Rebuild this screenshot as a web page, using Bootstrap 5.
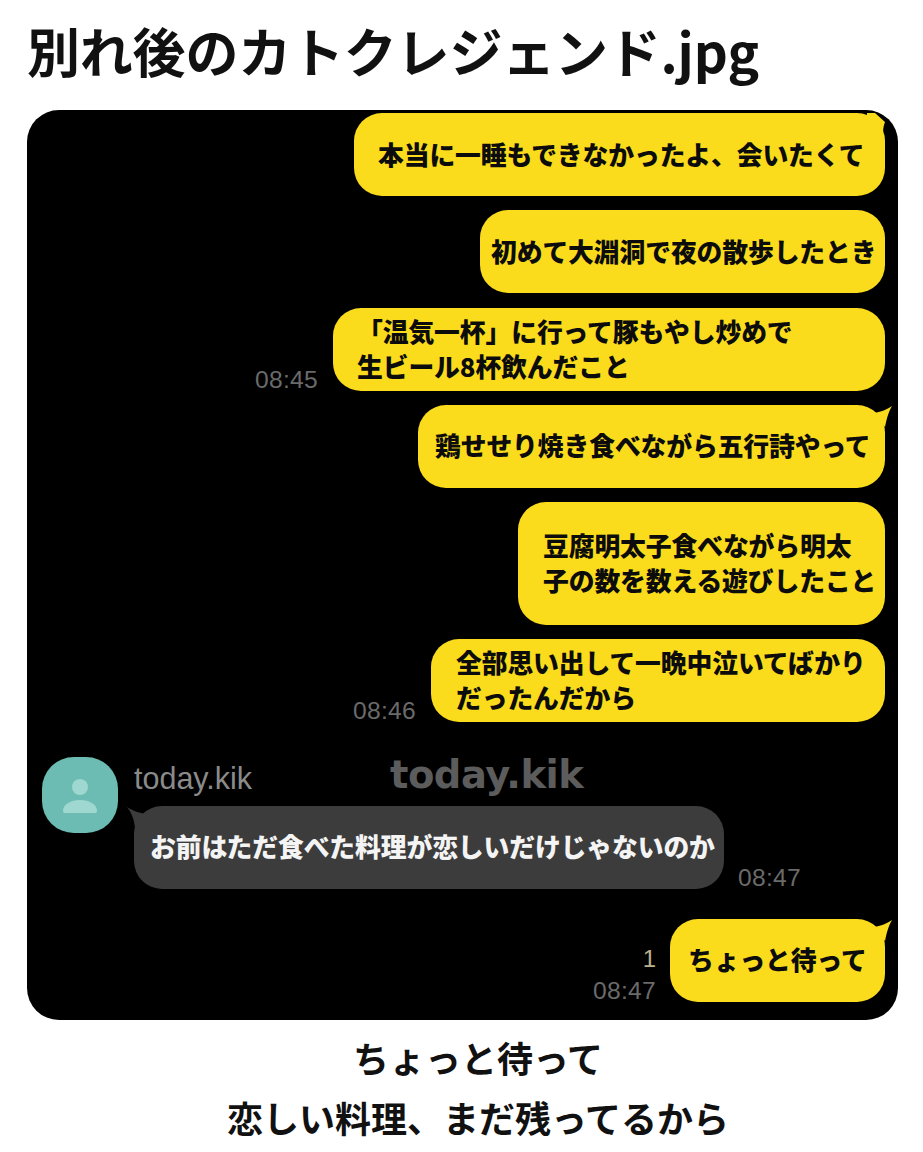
<!DOCTYPE html>
<html lang="ja">
<head>
<meta charset="utf-8">
<title>別れ後のカトクレジェンド.jpg</title>
<link rel="stylesheet" href="https://cdn.jsdelivr.net/npm/bootstrap@5.3.0/dist/css/bootstrap.min.css">
<style>
  html, body { background: #fff; }
  body { width: 923px; height: 1152px; overflow: hidden; font-family: "Noto Sans CJK JP", "Liberation Sans", sans-serif; color: #111; }
  .post-title { font-size: 53px; font-weight: 700; line-height: 72px; margin: 14px 0 24px 27px; letter-spacing: -.2px; white-space: nowrap; }
  .chat-panel { position: relative; width: 871px; height: 910px; margin-left: 27px; background: #000; border-radius: 32px; padding: 3px 13px 0 15px; }
  .msg-row { margin-bottom: 14.3px; }
  .bubble { position: relative; background: #fbdc1c; color: #0c0c0c; border-radius: 28px; font-size: 25.8px; font-weight: 900; line-height: 35px; letter-spacing: -.1px; white-space: nowrap; display: flex; flex-direction: column; justify-content: center; min-height: 83px; padding-bottom: 3px; }
  .bubble-tail { position: absolute; top: 0; right: -8px; width: 22px; height: 22px; fill: #fbdc1c; }
  .bubble-corner { position: absolute; top: 0; right: 0; width: 18px; height: 22px; fill: #fbdc1c; }
  .w-1 { width: 531px; padding-left: 24px; }
  .w-2 { width: 405px; padding-left: 11px; }
  .w-3 { width: 552px; padding-left: 24px; }
  .w-4 { width: 467px; padding-left: 17px; }
  .w-5 { width: 367px; height: 123px; padding-left: 25px; }
  .w-6 { width: 454px; padding-left: 25px; }
  .w-7 { width: 215px; padding-left: 18px; }
  .stamp { color: #6a6a6a; font-family: "Liberation Sans", sans-serif; font-size: 24.6px; line-height: 22px; letter-spacing: .3px; margin-right: 15px; }
  .stamp-last { margin-right: 14px; }
  .stamp-peer { margin-left: 14px; margin-right: 0; }
  .unread { color: #b9b28c; font-family: "Liberation Sans", sans-serif; font-size: 24px; line-height: 30px; margin-right: 14px; padding-bottom: 6px; }
  .peer-row { margin-top: 20px; margin-bottom: 30px; }
  .avatar-tile { flex: none; width: 76px; height: 76px; border-radius: 32px; background: #6dbcb3; display: flex; align-items: center; justify-content: center; margin-right: 16px; }
  .peer-name { color: #8a8a8a; font-family: "Liberation Sans", sans-serif; font-size: 30.5px; line-height: 30px; height: 49px; padding-top: 6px; }
  .bubble-peer { background: #3c3c3c; color: #f4f4f4; width: 590px; padding-left: 16px; border-radius: 28px; }
  .peer-tail { position: absolute; top: 0; left: -7px; width: 22px; height: 22px; fill: #3c3c3c; }
  .watermark { position: absolute; left: 363px; top: 641px; color: #5c5c5c; font-family: "DejaVu Sans", sans-serif; font-size: 38.5px; font-weight: 700; line-height: 48px; letter-spacing: -.5px; }
  .caption { font-size: 36px; font-weight: 700; line-height: 60px; margin: 7px 0 0 33px; text-align: center; color: #111; }
</style>
</head>
<body>
  <h1 class="post-title">別れ後のカトクレジェンド.jpg</h1>

  <section class="chat-panel d-flex flex-column">
    <div class="msg-row d-flex justify-content-end align-items-end">
      <div class="bubble w-1">本当に一睡もできなかったよ、会いたくて
        <svg class="bubble-corner" viewBox="0 0 18 22"><path d="M0 0H8L18 9C16 14 16 18 16 22H0Z"/></svg>
      </div>
    </div>
    <div class="msg-row d-flex justify-content-end align-items-end">
      <div class="bubble w-2">初めて大淵洞で夜の散歩したとき</div>
    </div>
    <div class="msg-row d-flex justify-content-end align-items-end">
      <span class="stamp">08:45</span>
      <div class="bubble w-3">「温気一杯」に行って豚もやし炒めで<br>生ビール8杯飲んだこと</div>
    </div>
    <div class="msg-row d-flex justify-content-end align-items-end">
      <div class="bubble w-4">鶏せせり焼き食べながら五行詩やって
        <svg class="bubble-tail" viewBox="0 0 22 22"><path d="M0 8C8 8 15 5 21 1C18 6 16 12 14 22Z"/></svg>
      </div>
    </div>
    <div class="msg-row d-flex justify-content-end align-items-end">
      <div class="bubble w-5">豆腐明太子食べながら明太<br>子の数を数える遊びしたこと</div>
    </div>
    <div class="msg-row d-flex justify-content-end align-items-end">
      <span class="stamp">08:46</span>
      <div class="bubble w-6">全部思い出して一晩中泣いてばかり<br>だったんだから</div>
    </div>

    <div class="peer-row d-flex align-items-start">
      <div class="avatar-tile">
        <svg width="36" height="36" viewBox="0 0 36 36" fill="#9ed8d0"><circle cx="18" cy="10" r="8"/><path d="M1 34C1 27 9 23 18 23S35 27 35 34C35 35 34 36 33 36H3C2 36 1 35 1 34Z"/></svg>
      </div>
      <div class="d-flex flex-column">
        <div class="peer-name">today.kik</div>
        <div class="d-flex align-items-end">
          <div class="bubble bubble-peer">お前はただ食べた料理が恋しいだけじゃないのか
            <svg class="peer-tail" viewBox="0 0 22 22"><path d="M0 1C6 5 14 8 22 8L8 22C7 12 4 6 0 1Z"/></svg>
          </div>
          <span class="stamp stamp-peer">08:47</span>
        </div>
      </div>
    </div>

    <div class="d-flex justify-content-end align-items-end">
      <div class="d-flex flex-column align-items-end">
        <span class="unread">1</span>
        <span class="stamp stamp-last">08:47</span>
      </div>
      <div class="bubble w-7">ちょっと待って
        <svg class="bubble-tail" viewBox="0 0 22 22"><path d="M0 8C8 8 15 5 21 1C18 6 16 12 14 22Z"/></svg>
      </div>
    </div>

    <div class="watermark">today.kik</div>
  </section>

  <p class="caption">ちょっと待って<br>恋しい料理、まだ残ってるから</p>

  <script src="https://cdn.jsdelivr.net/npm/bootstrap@5.3.0/dist/js/bootstrap.bundle.min.js"></script>
</body>
</html>
